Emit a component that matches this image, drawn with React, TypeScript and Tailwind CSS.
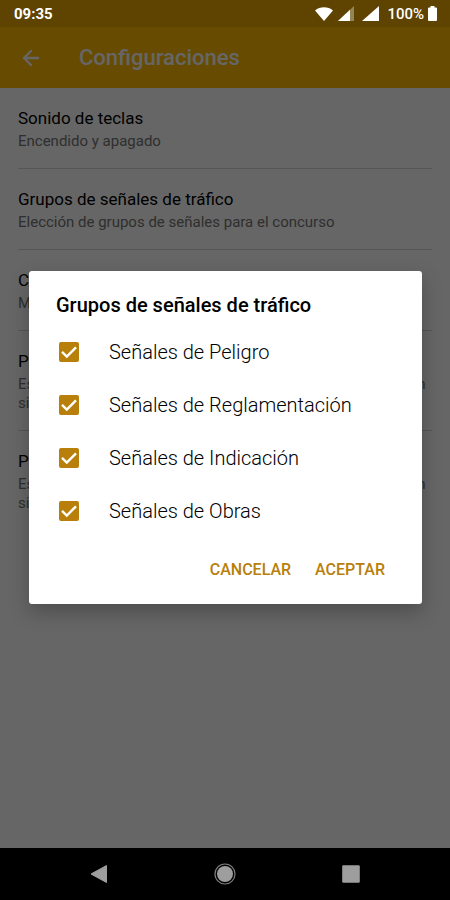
import { useState } from "react";
import { ArrowLeft } from "lucide-react";

const settings = [
  { title: "Sonido de teclas", text: "Encendido y apagado" },
  {
    title: "Grupos de señales de tráfico",
    text: "Elección de grupos de señales para el concurso",
  },
  { title: "Cantidad de preguntas", text: "Máximo de preguntas por concurso" },
  {
    title: "Pasar a la siguiente pregunta",
    text: "Espera antes de pasar a la pregunta que viene a continuación si la respuesta es correcta",
  },
  {
    title: "Pausa tras un error",
    text: "Espera antes de pasar a la pregunta que viene a continuación si la respuesta es errónea",
  },
];

const groups = [
  "Señales de Peligro",
  "Señales de Reglamentación",
  "Señales de Indicación",
  "Señales de Obras",
];

function StatusBar() {
  return (
    <div className="flex h-[27px] shrink-0 items-center justify-between bg-[#5f4300] pl-[14px] pr-[13px] text-[15px] font-bold leading-5 text-white">
      <span>09:35</span>
      <div className="flex items-center">
        <svg className="h-[14px] w-[18px]" viewBox="0 0 18 14" fill="currentColor">
          <path d="M0 3.5C5 -0.8 13 -0.8 18 3.5L9 14Z" />
        </svg>
        <svg className="ml-[5px] h-[15px] w-4" viewBox="0 0 16 15" fill="currentColor">
          <path d="M0 15L16 0V15Z" opacity="0.35" />
          <path d="M0 15L12 3.75V15Z" />
        </svg>
        <svg className="ml-2 h-[15px] w-[17px]" viewBox="0 0 17 15" fill="currentColor">
          <path d="M0 15L17 0V15Z" />
        </svg>
        <span className="ml-2 font-medium">100%</span>
        <svg className="ml-1 h-[15px] w-[9px]" viewBox="0 0 9 15" fill="currentColor">
          <path d="M2.5 0H6.5V1.5H8Q9 1.5 9 2.5V14Q9 15 8 15H1Q0 15 0 14V2.5Q0 1.5 1 1.5H2.5Z" />
        </svg>
      </div>
    </div>
  );
}

function GroupRow({ label }: { label: string }) {
  const [checked, setChecked] = useState(true);
  return (
    <label className="flex h-[53px] items-center">
      <span className="grid size-5 shrink-0 place-items-center">
        <input
          type="checkbox"
          checked={checked}
          onChange={(e) => setChecked(e.target.checked)}
          className="col-start-1 row-start-1 size-5 appearance-none rounded-xs border-2 border-[#b8800b] checked:bg-[#b8800b]"
        />
        {checked && (
          <svg
            className="pointer-events-none col-start-1 row-start-1 size-5"
            viewBox="0 0 20 20"
            fill="none"
            stroke="white"
            strokeWidth="2.4"
          >
            <path d="M3 9.8L7.8 14.5L17 5.3" />
          </svg>
        )}
      </span>
      <span className="ml-[30px] text-[20px] font-light leading-6 text-black">{label}</span>
    </label>
  );
}

function NavBar() {
  return (
    <nav className="flex h-[52px] shrink-0 items-center justify-around bg-black px-9 text-[#9e9e9e]">
      <button aria-label="Atrás">
        <svg className="size-5" viewBox="0 0 20 20" fill="currentColor">
          <path d="M2 10L17.5 1.5V18.5Z" stroke="currentColor" strokeLinejoin="round" />
        </svg>
      </button>
      <button aria-label="Inicio">
        <svg className="size-[22px]" viewBox="0 0 22 22">
          <circle cx="11" cy="11" r="10" fill="none" stroke="#7e7e7e" strokeWidth="1.2" />
          <circle cx="11" cy="11" r="8" fill="#9e9e9e" />
        </svg>
      </button>
      <button aria-label="Recientes">
        <svg className="size-5" viewBox="0 0 20 20" fill="currentColor">
          <rect x="1.2" y="1.2" width="17.6" height="17.6" rx="1.2" />
        </svg>
      </button>
    </nav>
  );
}

export default function App() {
  return (
    <div className="flex min-h-screen flex-col bg-white font-['Roboto',sans-serif]">
      <StatusBar />
      <div className="relative flex grow flex-col">
        <header className="flex h-[61px] items-center bg-[#ffbb00] pl-[19px] text-white">
          <button aria-label="Volver">
            <ArrowLeft className="size-6" strokeWidth={2.4} />
          </button>
          <h1 className="ml-9 text-[22px] font-medium leading-7">Configuraciones</h1>
        </header>
        <main className="px-[18px]">
          {settings.map((item) => (
            <section
              key={item.title}
              className="border-b border-[#d6d6d6] pb-[17px] pt-[19px] last:border-b-0"
            >
              <h2 className="mb-[3px] text-[17px] leading-[22px] text-black">{item.title}</h2>
              <p className="text-[15px] leading-[19px] text-[#757575]">{item.text}</p>
            </section>
          ))}
        </main>

        <div className="absolute inset-0 flex items-center bg-black/60 pl-[29px] pr-7">
          <div
            role="dialog"
            aria-labelledby="dialog-title"
            className="w-full rounded-[3px] bg-white pt-5 shadow-[0_8px_20px_rgba(0,0,0,0.25)]"
          >
            <h2 id="dialog-title" className="mb-[6px] px-[27px] text-[20px] font-medium leading-7 text-black">
              Grupos de señales de tráfico
            </h2>
            <div className="px-[30px]">
              {groups.map((label) => (
                <GroupRow key={label} label={label} />
              ))}
            </div>
            <div className="flex h-[67px] justify-end gap-6 pr-[37px] text-[16px] font-medium text-[#b8800b]">
              <button className="h-[66px]">CANCELAR</button>
              <button className="h-[66px]">ACEPTAR</button>
            </div>
          </div>
        </div>
      </div>
      <NavBar />
    </div>
  );
}
